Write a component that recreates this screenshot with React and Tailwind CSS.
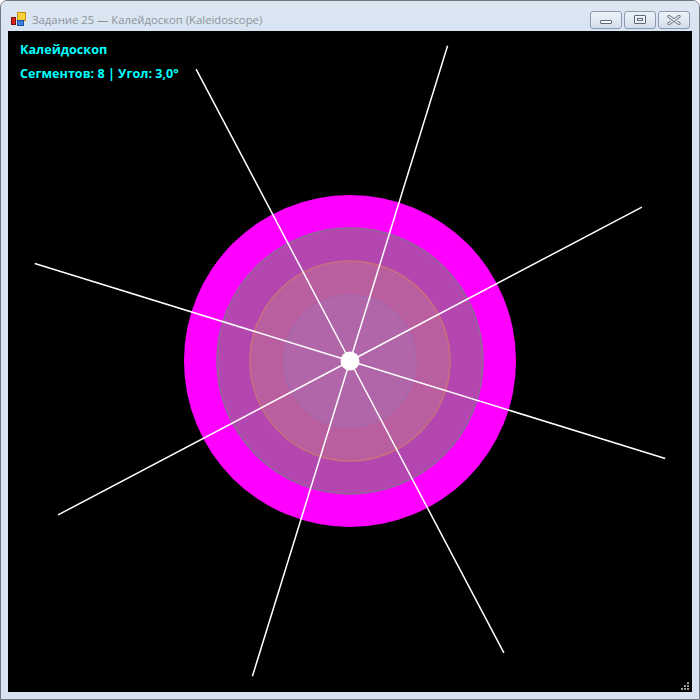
import React from 'react';

const CX = 342;
const CY = 330;
const LEN = 330;

const rays = Array.from({ length: 8 }, (_, i) => {
  const a = ((17.2 + i * 45) * Math.PI) / 180;
  return { x: CX + Math.cos(a) * LEN, y: CY + Math.sin(a) * LEN };
});

const AppIcon = () => (
  <svg width="15" height="15" viewBox="0 0 15 15">
    <rect x="0.5" y="5.5" width="4" height="7" fill="#d22" stroke="#7a1010" />
    <rect x="6.5" y="0.5" width="8" height="8" fill="#f7d23a" stroke="#c98a10" />
    <rect x="6.5" y="8.5" width="6" height="5" fill="#3f7fe0" stroke="#2050a0" />
  </svg>
);

const CaptionButton = ({ children }) => (
  <div className="w-[32px] h-[18px] rounded-[3px] border border-[#8c9bb0] bg-gradient-to-b from-[#eef3f9] to-[#d3deeb] flex items-center justify-center">
    {children}
  </div>
);

const App = () => {
  return (
    <div className="w-[700px] h-[700px] bg-[#d8e4f1] border border-[#6f7780] rounded-t-[7px] flex flex-col overflow-hidden" style={{ fontFamily: '"Open Sans", "Noto Sans", sans-serif' }}>
      {/* Title bar */}
      <div className="h-[30px] flex items-center pt-[7px] pl-[10px] pr-[9px] bg-gradient-to-b from-[#dde7f2] to-[#d8e4f1]">
        <AppIcon />
        <span className="ml-[6px] text-[11.3px] text-[#8d949c] leading-none">Задание 25 — Калейдоскоп (Kaleidoscope)</span>
        <div className="ml-auto flex gap-[2px] items-center">
          <CaptionButton>
            <div className="w-[12px] h-[4px] mt-[5px] border border-[#5d6a7c] bg-white rounded-[1px]" />
          </CaptionButton>
          <CaptionButton>
            <div className="w-[12px] h-[9px] border border-[#5d6a7c] bg-[#eef2f7] rounded-[1px] flex items-center justify-center">
              <div className="w-[6px] h-[3px] border border-[#5d6a7c]" />
            </div>
          </CaptionButton>
          <CaptionButton>
            <svg width="14" height="10" viewBox="0 0 14 10">
              <path d="M2 1.5 L12 8.5 M12 1.5 L2 8.5" stroke="#6b7686" strokeWidth="3.2" strokeLinecap="round" />
              <path d="M2 1.5 L12 8.5 M12 1.5 L2 8.5" stroke="#f4f6f9" strokeWidth="1.4" strokeLinecap="round" />
            </svg>
          </CaptionButton>
        </div>
      </div>

      {/* Client area */}
      <div className="mx-[7px] mb-[7px] flex-1 bg-black relative">
        <svg className="absolute inset-0" width="684" height="661" viewBox="0 0 684 661">
          <circle cx={CX} cy={CY} r="166" fill="#ff00ff" />
          <circle cx={CX} cy={CY} r="133" fill="#b446b0" stroke="#8f6898" strokeWidth="1.5" />
          <circle cx={CX} cy={CY} r="100" fill="#b95fa0" stroke="#c8707e" strokeWidth="1.5" />
          <circle cx={CX} cy={CY} r="66" fill="#b066a8" stroke="#a46aae" strokeWidth="1.2" />
          {rays.map((p, i) => (
            <line key={i} x1={CX} y1={CY} x2={p.x} y2={p.y} stroke="#ffffff" strokeWidth="1.5" />
          ))}
          <circle cx={CX} cy={CY} r="9.5" fill="#ffffff" />
          {/* resize grip */}
          <rect x="679" y="651" width="2" height="2" fill="#9a9a9a" />
          <rect x="676" y="654" width="2" height="2" fill="#9a9a9a" />
          <rect x="679" y="654" width="2" height="2" fill="#9a9a9a" />
          <rect x="673" y="657" width="2" height="2" fill="#9a9a9a" />
          <rect x="676" y="657" width="2" height="2" fill="#9a9a9a" />
          <rect x="679" y="657" width="2" height="2" fill="#9a9a9a" />
        </svg>
        <div className="absolute left-[12px] top-[13px] text-[#00ffff] font-bold text-[12.6px] leading-none flex flex-col gap-[11px]">
          <span>Калейдоскоп</span>
          <span>Сегментов: 8 | Угол: 3,0°</span>
        </div>
      </div>
    </div>
  );
};

export default App;
